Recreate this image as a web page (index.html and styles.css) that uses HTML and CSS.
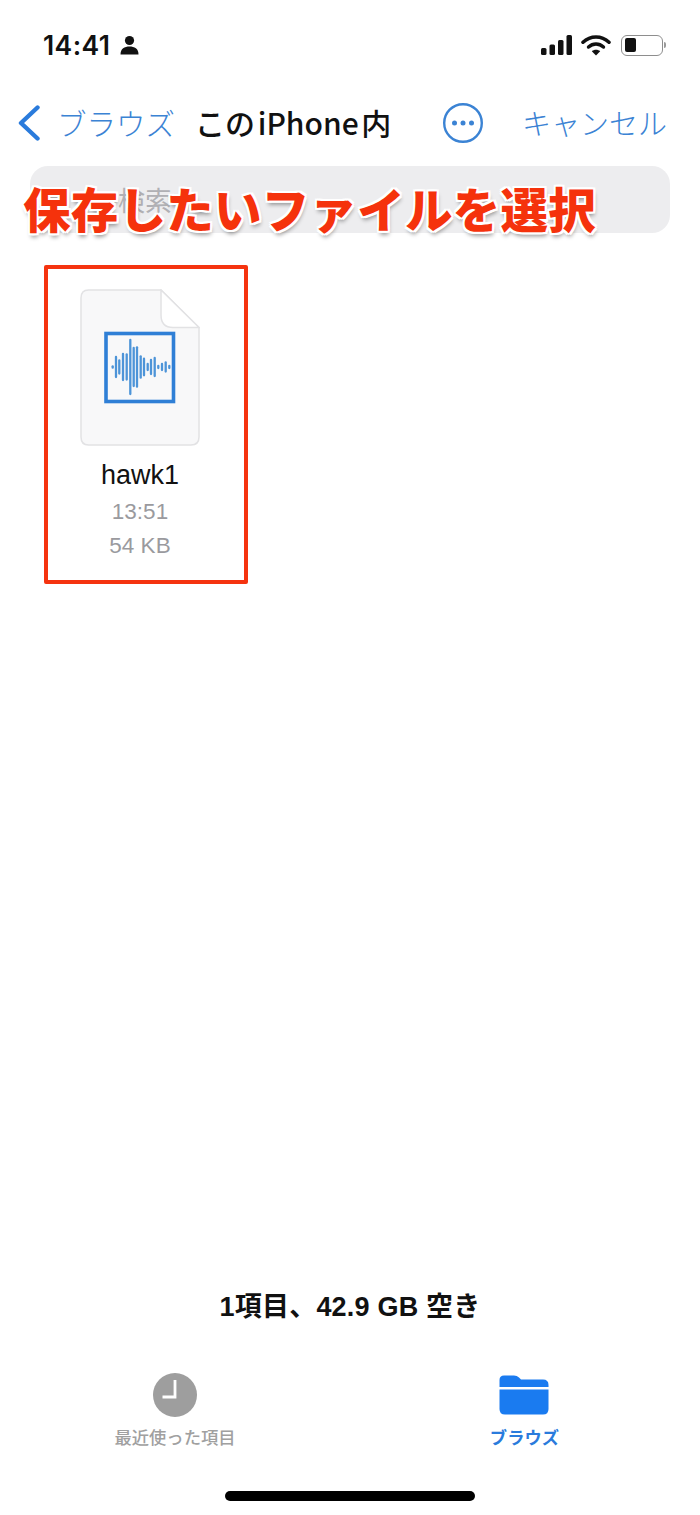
FILE: index.html
```html
<!DOCTYPE html>
<html lang="ja">
  <head>
    <meta charset="UTF-8" />
    <meta name="viewport" content="width=device-width, initial-scale=1.0" />
    <title>このiPhone内</title>
    <link rel="stylesheet" href="styles.css">
  </head>
  <body>
    <div class="screen">
      <div class="status">
        <div class="status-left">
          <span class="time">14:41</span>
          <svg class="person" width="19" height="20" viewBox="0 0 19 20">
            <circle cx="9.5" cy="5.5" r="4.6" fill="#111" />
            <path d="M0.5 19.5 C0.5 13.5 4.5 11.5 9.5 11.5 C14.5 11.5 18.5 13.5 18.5 19.5 Z" fill="#111" />
          </svg>
        </div>
        <div class="status-right">
          <svg width="32" height="20" viewBox="0 0 32 20">
            <rect x="0" y="13" width="5.5" height="7" rx="1.5" fill="#111" />
            <rect x="8.5" y="9.5" width="5.5" height="10.5" rx="1.5" fill="#111" />
            <rect x="17" y="5" width="5.5" height="15" rx="1.5" fill="#111" />
            <rect x="25.5" y="0" width="5.5" height="20" rx="1.5" fill="#111" />
          </svg>
          <svg class="wifi" width="30" height="22" viewBox="0 0 30 22">
            <path d="M2 8.2 C9.5 1.2 20.5 1.2 28 8.2" fill="none" stroke="#111" stroke-width="3.6" stroke-linecap="round" />
            <path d="M7.5 13 C12 9 18 9 22.5 13" fill="none" stroke="#111" stroke-width="3.4" stroke-linecap="round" />
            <path d="M10.8 17.2 C13 15.2 17 15.2 19.2 17.2 L15 21.6 Z" fill="#111" />
          </svg>
          <div class="battery"><div class="battery-level"></div></div>
          <div class="battery-tip"></div>
        </div>
      </div>

      <div class="nav">
        <div class="nav-back">
          <svg width="24" height="36" viewBox="0 0 24 36">
            <path d="M20.5 2.5 L4 18 L20.5 33.5" fill="none" stroke="#2a7bdc" stroke-width="4.4" stroke-linecap="round" stroke-linejoin="round" />
          </svg>
          <span class="nav-link back-label">ブラウズ</span>
        </div>
        <div class="nav-title">この iPhone 内</div>
        <svg class="more" width="42" height="42" viewBox="0 0 42 42">
          <circle cx="21" cy="21" r="18.8" fill="none" stroke="#3b83d4" stroke-width="2.4" />
          <circle cx="12.5" cy="21" r="2.5" fill="#3b83d4" />
          <circle cx="21" cy="21" r="2.5" fill="#3b83d4" />
          <circle cx="29.5" cy="21" r="2.5" fill="#3b83d4" />
        </svg>
        <span class="nav-link cancel">キャンセル</span>
      </div>

      <div class="search">
        <span class="search-hint">検索</span>
        <div class="callout">保存したいファイルを選択</div>
      </div>

      <div class="files">
        <div class="file">
          <svg class="file-icon" width="120" height="158" viewBox="0 0 120 158">
            <path d="M8.5 1 H81 L119 38.5 V148 Q119 156 111 156 H8.5 Q1 156 1 148 V9 Q1 1 8.5 1 Z" fill="#f8f8f9" stroke="#e2e2e4" stroke-width="1.5" />
            <path d="M81 1 V26 Q81 38.5 93 38.5 H119 Z" fill="#fff" stroke="#e2e2e4" stroke-width="1.5" />
            <rect x="26" y="44.5" width="67.5" height="68" fill="#f8f8f9" stroke="#2f7fd6" stroke-width="3.6" />
            <g stroke="#4d94d8" stroke-width="2.3" stroke-linecap="round">
              <path d="M32.7 77.3 v1.4" />
              <path d="M36 68 v20" />
              <path d="M39.3 71.5 v13" />
              <path d="M43 65 v26" />
              <path d="M46.7 65.5 v25" />
              <path d="M50.3 51 v54" />
              <path d="M53.7 59 v38" />
              <path d="M57 58.3 v39.4" />
              <path d="M60.7 67.3 v21.4" />
              <path d="M64 69.7 v16.6" />
              <path d="M67.7 75 v6" />
              <path d="M71 71 v14" />
              <path d="M74.7 69 v18" />
              <path d="M78.3 77 v2" />
              <path d="M82 75 v6" />
              <path d="M85.7 73.5 v9" />
              <path d="M89.3 77 v2" />
            </g>
          </svg>
          <div class="file-name">hawk1</div>
          <div class="file-meta">13:51</div>
          <div class="file-meta">54 KB</div>
        </div>
      </div>

      <div class="summary">1項目、42.9 GB 空き</div>

      <div class="tabs">
        <div class="tab tab-recent">
          <svg width="44" height="44" viewBox="0 0 44 44">
            <circle cx="22" cy="22" r="22" fill="#9e9e9e" />
            <path d="M22 7 V24 H9.5" fill="none" stroke="#fff" stroke-width="2.8" />
          </svg>
          <span class="tab-label">最近使った項目</span>
        </div>
        <div class="tab tab-browse">
          <svg width="50" height="40" viewBox="0 0 50 40">
            <path d="M0.5 12 V5 Q0.5 0.5 5 0.5 H15 Q18 0.5 20 2.5 L22 4.5 H44 Q49.5 4.5 49.5 10 V12 Z" fill="#1a7bf0" />
            <path d="M0.5 14.5 H49.5 V34 Q49.5 39.5 44 39.5 H6 Q0.5 39.5 0.5 34 Z" fill="#1a7bf0" />
          </svg>
          <span class="tab-label">ブラウズ</span>
        </div>
      </div>

      <div class="home-bar"></div>
    </div>
  </body>
</html>
```

FILE: styles.css
```css
* {
  box-sizing: border-box;
}
body {
  margin: 0;
  background-color: #fff;
  font-family: "Liberation Sans", "Noto Sans CJK JP", sans-serif;
}
.screen {
  display: flex;
  flex-direction: column;
  width: 700px;
  height: 1515px;
  overflow: hidden;
}
.status {
  display: flex;
  justify-content: space-between;
  align-items: center;
  height: 90px;
  padding: 0 34px 0 43px;
}
.status-left {
  display: flex;
  align-items: center;
  gap: 10px;
}
.time {
  font-family: Inter, "Liberation Sans", sans-serif;
  font-size: 26.5px;
  font-weight: 600;
  letter-spacing: 0.4px;
  color: #111;
}
.status-right {
  display: flex;
  align-items: center;
}
.wifi {
  margin-left: 8px;
}
.battery {
  width: 42px;
  height: 21px;
  margin-left: 10px;
  padding: 2.5px 3px;
  border: 1.5px solid #8e8e8e;
  border-radius: 6px;
}
.battery-level {
  width: 11px;
  height: 100%;
  border-radius: 2px;
  background-color: #111;
}
.battery-tip {
  width: 2px;
  height: 6px;
  margin-left: 1px;
  border-radius: 0 2px 2px 0;
  background-color: #9a9a9a;
}
.nav {
  display: flex;
  align-items: center;
  height: 66px;
  padding: 0 33px 0 17px;
  margin-bottom: 10px;
}
.nav-back {
  display: flex;
  align-items: center;
  gap: 16px;
}
.nav-link {
  margin-top: -3px;
  font-size: 29px;
  color: #3b83d4;
  font-family: "Noto Sans CJK JP", sans-serif;
  font-weight: 300;
  white-space: nowrap;
}
.back-label {
  width: 116px;
  font-size: 29.5px;
}
.nav-title {
  margin-top: -3px;
  margin-left: 22px;
  width: 197px;
  font-family: "Noto Sans CJK JP", sans-serif;
  font-size: 30px;
  font-weight: 500;
  word-spacing: -4px;
  color: #111;
  white-space: nowrap;
}
.more {
  margin-left: 50px;
}
.cancel {
  margin-left: auto;
}
.search {
  position: relative;
  width: 640px;
  height: 67px;
  margin: 0 0 32px 30px;
  border-radius: 18px;
  background-color: #ededef;
}
.search-hint {
  position: absolute;
  left: 88px;
  top: 14px;
  font-family: "Noto Sans CJK JP", sans-serif;
  font-size: 27px;
  color: #b0b0b4;
}
.callout {
  position: absolute;
  left: -7px;
  top: 10px;
  font-family: "Noto Sans CJK JP", sans-serif;
  font-size: 47.5px;
  line-height: 64px;
  font-weight: 900;
  letter-spacing: 0.25px;
  color: #f5320c;
  white-space: nowrap;
  text-shadow: 2px 0 0 #fff, -2px 0 0 #fff, 0 2px 0 #fff, 0 -2px 0 #fff, 2px 2px 0 #fff, -2px 2px 0 #fff, 2px -2px 0 #fff, -2px -2px 0 #fff, 1px 4px 4px rgba(0, 0, 0, 0.4);
}
.files {
  display: flex;
  flex: 1;
  padding-left: 44px;
}
.file {
  display: flex;
  flex-direction: column;
  align-items: center;
  width: 204px;
  height: 319px;
  padding: 20px 12px 0 0;
  border: 4px solid #f5330f;
  border-radius: 2px;
}
.file-name {
  margin-top: 9px;
  font-size: 27px;
  line-height: 39px;
  color: #111;
}
.file-meta {
  margin-top: -1px;
  font-size: 22.5px;
  line-height: 35px;
  color: #9a9a9e;
}
.summary {
  padding-top: 1px;
  text-align: center;
  font-family: "Liberation Sans", "Noto Sans CJK JP", sans-serif;
  font-size: 27px;
  line-height: 38px;
  font-weight: 700;
  letter-spacing: 0.2px;
  color: #111;
  margin-bottom: 47px;
}
.tabs {
  display: flex;
  justify-content: space-between;
  padding: 0 141px 0 114.5px;
}
.tab {
  display: flex;
  flex-direction: column;
  align-items: center;
}
.tab-browse {
  padding-top: 2px;
}
.tab-browse svg {
  margin-bottom: 2px;
}
.tab-label {
  margin-top: 7px;
  font-family: "Noto Sans CJK JP", sans-serif;
  font-size: 17.3px;
  line-height: 26px;
  font-weight: 500;
  color: #a0a0a0;
}
.tab-browse .tab-label {
  font-weight: 700;
  color: #2a7bdc;
}
.home-bar {
  width: 250px;
  height: 10px;
  margin: 41px auto 14px;
  border-radius: 5px;
  background-color: #000;
}
```
